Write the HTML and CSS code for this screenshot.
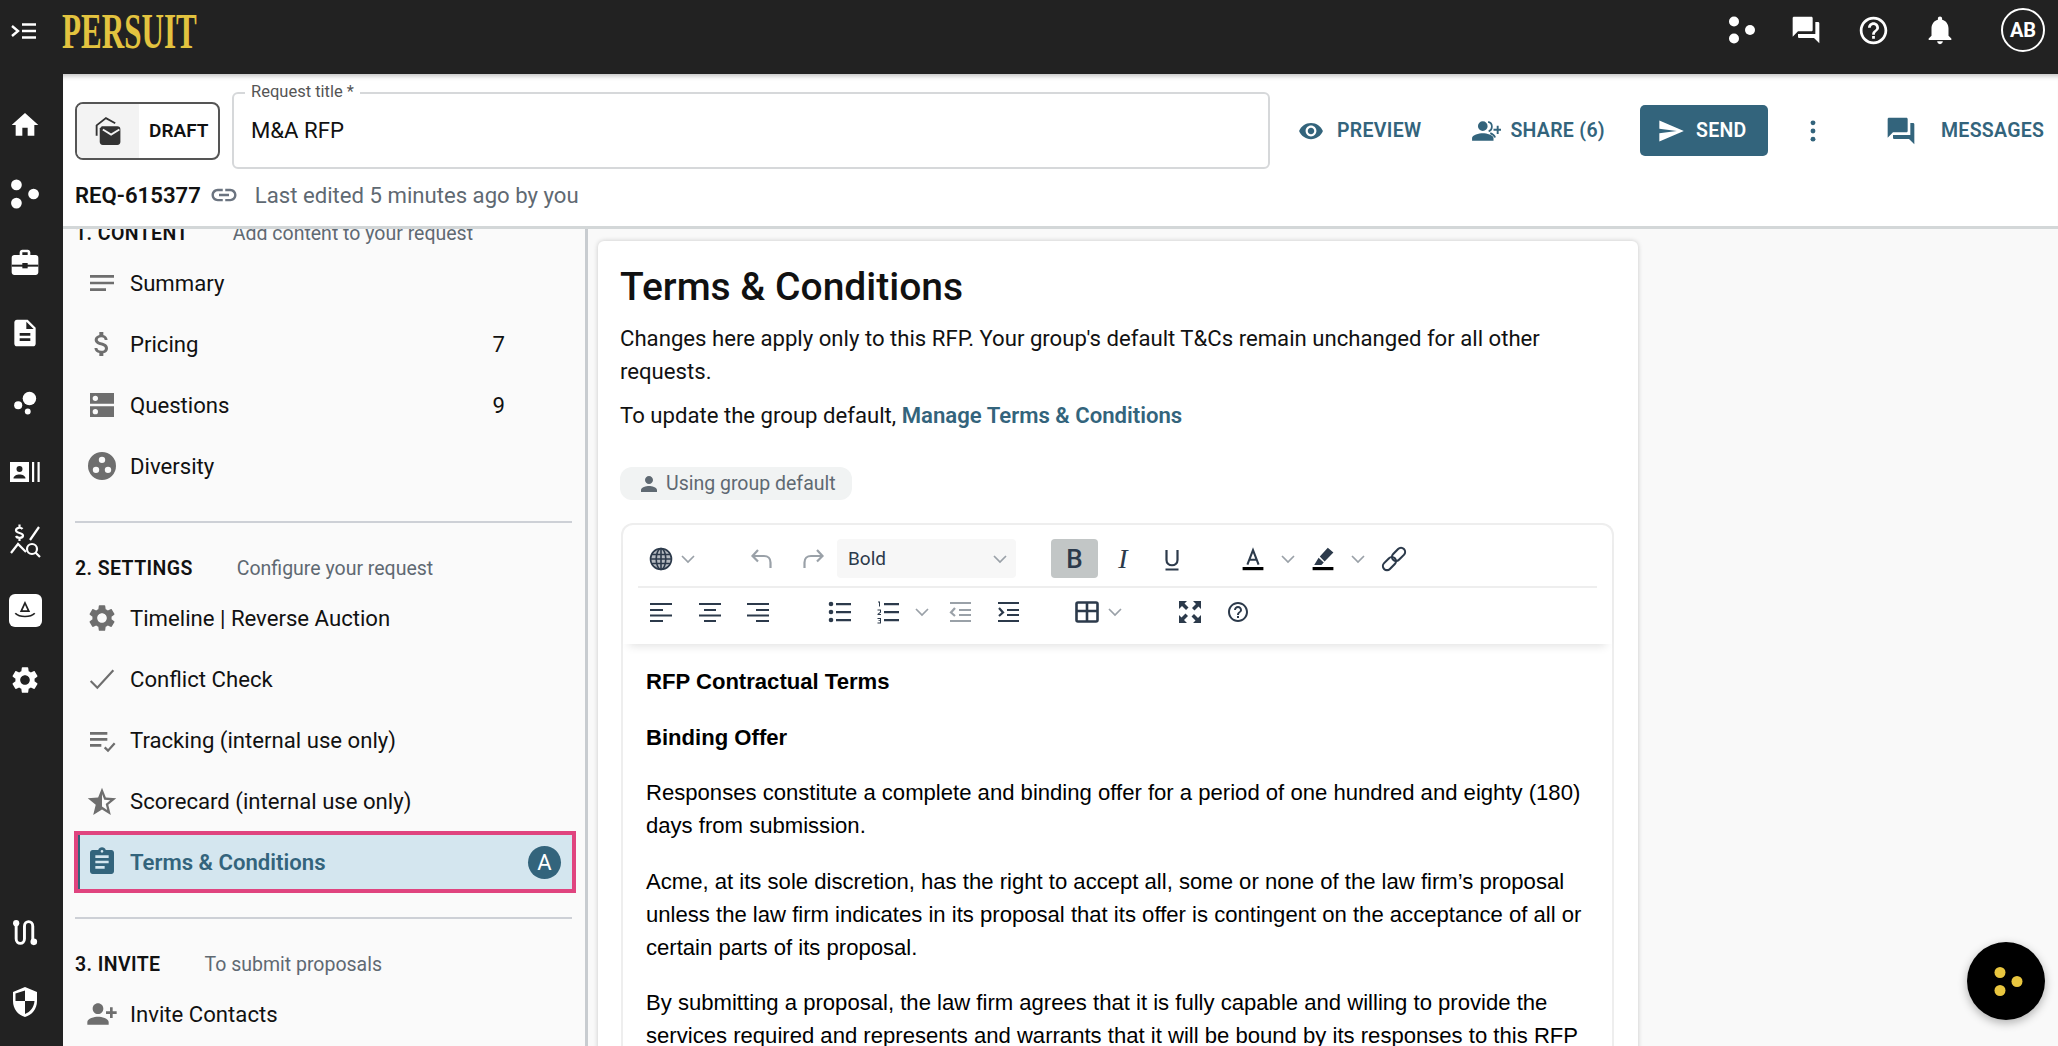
FILE: index.html
```html
<!DOCTYPE html>
<html lang="en">
<head>
    <meta charset="UTF-8">
    <meta name="viewport" content="width=device-width, initial-scale=1.0">
    <title>Terms &amp; Conditions</title>
    <link rel="stylesheet" href="styles.css">
</head>
<body>
    <svg class="defs" aria-hidden="true">
        <symbol id="i-dots" viewBox="0 0 28 28"><circle cx="6" cy="5.5" r="5"/><circle cx="6" cy="22.5" r="5"/><circle cx="22" cy="14" r="5"/></symbol>
        <symbol id="i-forum" viewBox="0 0 24 24"><path d="M21 6h-2v9H6v2c0 .55.45 1 1 1h11l4 4V7c0-.55-.45-1-1-1zm-4 6V3c0-.55-.45-1-1-1H3c-.55 0-1 .45-1 1v14l4-4h10c.55 0 1-.45 1-1z"/></symbol>
        <symbol id="i-gear" viewBox="0 0 24 24"><path d="M19.14 12.94c.04-.3.06-.61.06-.94 0-.32-.02-.64-.07-.94l2.03-1.58c.18-.14.23-.41.12-.61l-1.92-3.32c-.12-.22-.37-.29-.59-.22l-2.39.96c-.5-.38-1.03-.7-1.62-.94l-.36-2.54c-.04-.24-.24-.41-.48-.41h-3.84c-.24 0-.43.17-.47.41l-.36 2.54c-.59.24-1.13.57-1.62.94l-2.39-.96c-.22-.08-.47 0-.59.22L2.74 8.87c-.12.21-.08.47.12.61l2.03 1.58c-.05.3-.09.63-.09.94s.02.64.07.94l-2.03 1.58c-.18.14-.23.41-.12.61l1.92 3.32c.12.22.37.29.59.22l2.39-.96c.5.38 1.03.7 1.62.94l.36 2.54c.05.24.24.41.48.41h3.84c.24 0 .44-.17.47-.41l.36-2.54c.59-.24 1.13-.56 1.62-.94l2.39.96c.22.08.47 0 .59-.22l1.92-3.32c.12-.22.07-.47-.12-.61l-2.01-1.58zM12 15.6c-1.98 0-3.6-1.62-3.6-3.6s1.62-3.6 3.6-3.6 3.6 1.62 3.6 3.6-1.62 3.6-3.6 3.6z"/></symbol>
        <symbol id="i-help" viewBox="0 0 24 24"><path d="M11 18h2v-2h-2v2zm1-16C6.48 2 2 6.48 2 12s4.48 10 10 10 10-4.48 10-10S17.52 2 12 2zm0 18c-4.41 0-8-3.59-8-8s3.59-8 8-8 8 3.59 8 8-3.59 8-8 8zm0-14c-2.21 0-4 1.79-4 4h2c0-1.1.9-2 2-2s2 .9 2 2c0 2-3 1.75-3 5h2c0-2.25 3-2.5 3-5 0-2.21-1.79-4-4-4z"/></symbol>
        <symbol id="i-person-add" viewBox="0 0 24 24"><path transform="matrix(-1 0 0 1 24 0)" d="M15 12c2.21 0 4-1.79 4-4s-1.79-4-4-4-4 1.79-4 4 1.79 4 4 4zm-9-2V7H4v3H1v2h3v3h2v-3h3v-2H6zm9 4c-2.67 0-8 1.34-8 4v2h16v-2c0-2.66-5.33-4-8-4z"/></symbol>
        <symbol id="i-chev" viewBox="0 0 20 20"><path d="M4 7l6 6 6-6" fill="none" stroke="currentColor" stroke-width="1.7"/></symbol>
    </svg>

    <header class="topbar">
        <svg class="top-menu" viewBox="0 0 26 16" fill="none" stroke="currentColor" stroke-width="2.4"><path d="M1 3l6 5-6 5M11 1.500h14M11 8h14M11 14.500h14"/></svg>
        <div class="logo"><span>PERSUIT</span></div>
        <div class="top-icons">
            <svg class="ti-dots" fill="currentColor"><use href="#i-dots"/></svg>
            <svg class="ti-forum" fill="currentColor"><use href="#i-forum"/></svg>
            <svg class="ti-help" fill="currentColor"><use href="#i-help"/></svg>
            <svg class="ti-bell" viewBox="0 0 24 24" fill="currentColor"><path d="M12 22c1.1 0 2-.9 2-2h-4c0 1.1.89 2 2 2zm6-6v-5c0-3.07-1.64-5.64-4.5-6.32V4c0-.83-.67-1.5-1.5-1.5s-1.5.67-1.5 1.5v.68C7.63 5.36 6 7.92 6 11v5l-2 2v1h16v-1l-2-2z"/></svg>
            <div class="avatar">AB</div>
        </div>
    </header>

    <div class="shell">
        <nav class="rail">
            <span class="rail-btn"><svg viewBox="0 0 24 24" fill="currentColor"><path d="M10 20v-6h4v6h5v-8h3L12 3 2 12h3v8z"/></svg></span>
            <span class="rail-btn"><svg class="dots" fill="currentColor"><use href="#i-dots"/></svg></span>
            <span class="rail-btn"><svg viewBox="0 0 24 24" fill="currentColor"><path d="M20 6h-4V4c0-1.11-.89-2-2-2h-4c-1.11 0-2 .89-2 2v2H4c-1.11 0-1.99.89-1.99 2L2 19c0 1.11.89 2 2 2h16c1.11 0 2-.89 2-2V8c0-1.11-.89-2-2-2zm-6 0h-4V4h4v2z"/><path d="M2 14h20" stroke="#222" stroke-width="1.5"/><rect x="10" y="12" width="4" height="4" fill="#222"/></svg></span>
            <span class="rail-btn"><svg viewBox="0 0 24 24" fill="currentColor"><path d="M14 2H6c-1.1 0-1.99.9-1.99 2L4 20c0 1.1.89 2 1.99 2H18c1.1 0 2-.9 2-2V8l-6-6zm2 16H8v-2h8v2zm0-4H8v-2h8v2zm-3-5V3.5L18.5 9H13z"/></svg></span>
            <span class="rail-btn"><svg class="bubbles" viewBox="0 0 24 24" fill="currentColor"><circle cx="15.5" cy="8.5" r="6"/><circle cx="5.5" cy="14.5" r="3.6"/><circle cx="14" cy="20" r="2.6"/></svg></span>
            <span class="rail-btn"><svg class="wide" viewBox="0 0 32 24" fill="currentColor"><path fill-rule="evenodd" d="M1 2h19v20H1zM10.5 6a3 3 0 1 0 0 6 3 3 0 0 0 0-6zM4.500 18.500h12c0-2.500-3-4-6-4s-6 1.500-6 4z"/><path d="M23 2h2.200v20H23zM28.500 2h2.200v20h-2.200z"/></svg></span>
            <span class="rail-btn"><svg class="rfq" viewBox="0 0 32 36" fill="none" stroke="currentColor" stroke-width="2.2"><path d="M13.500 6c-1.500-2-6.500-1.500-6.500 1.500 0 3 7 2 7 5s-6 3-7 .5M10.500 1.500V4M10.500 15v3M21 17L30 4M2 30l7-9 8 8"/><circle cx="23" cy="26" r="5"/><path d="M26.500 29.500L31 34"/></svg></span>
            <span class="rail-btn"><span class="rail-logo"><svg viewBox="0 0 24 24" fill="none" stroke="#222" stroke-width="1.6"><path d="M12 5.500L8.500 13h7zM3 15c4 4 14 4 18 0"/></svg></span></span>
            <span class="rail-btn"><svg viewBox="0 0 24 24" fill="currentColor"><use href="#i-gear"/></svg></span>
            <span class="rail-btn rail-low"><svg class="route" viewBox="0 0 26 26" fill="none" stroke="currentColor" stroke-width="2.8"><path d="M4 4v15c0 6 8 6 8 0V7c0-6 8-6 8 0v15"/><circle cx="4" cy="4" r="3" fill="currentColor" stroke="none"/><circle cx="21" cy="22" r="3.200" fill="currentColor" stroke="none"/></svg></span>
            <span class="rail-btn"><svg class="tall" viewBox="0 0 26 32" fill="currentColor"><path fill-rule="evenodd" d="M13 1L1 6v9c0 8 5 14 12 16 7-2 12-8 12-16V6zM13 4.500V15H3.500V7.500zM13 15h9.500c-.5 6-4 11-9.500 13z"/></svg></span>
        </nav>

        <div class="page">
            <section class="req-head">
                <div class="req-row">
                    <div class="draft">
                        <span class="draft-icon"><svg viewBox="0 0 28 30" fill="none"><path d="M3 20V10l9-7 9 5" stroke="#333" stroke-width="1.8"/><path d="M8 11h15a3 3 0 0 1 3 3v12a3 3 0 0 1-3 3H9a3 3 0 0 1-3-3V13z" fill="#333"/><path d="M9 14l8 5 8-5" stroke="#f3f3f3" stroke-width="1.8"/></svg></span>
                        <span class="draft-text">DRAFT</span>
                    </div>
                    <div class="title-field">
                        <label class="title-label">Request title *</label>
                        <span class="title-value">M&amp;A RFP</span>
                    </div>
                    <a class="act act-preview"><svg viewBox="0 0 24 24" fill="currentColor"><path d="M12 4.500C7 4.500 2.730 7.610 1 12c1.730 4.390 6 7.500 11 7.500s9.270-3.110 11-7.500c-1.730-4.390-6-7.500-11-7.500zM12 17c-2.760 0-5-2.240-5-5s2.240-5 5-5 5 2.240 5 5-2.240 5-5 5zm0-8c-1.660 0-3 1.340-3 3s1.340 3 3 3 3-1.340 3-3-1.340-3-3-3z"/></svg>PREVIEW</a>
                    <a class="act act-share"><svg viewBox="0 0 28 24" fill="currentColor"><path d="M11 12a4.500 4.500 0 1 0 0-9 4.500 4.500 0 0 0 0 9zM11 14c-3.500 0-10 1.600-10 4.500V21h20v-2.500c0-2.900-6.500-4.500-10-4.500z"/><path d="M16 3.500c2.500.5 3.500 2.500 3.500 4.500s-1 3.600-3 4.300M18 14c2 .8 4 2 4.500 4" fill="none" stroke="currentColor" stroke-width="1.6"/><path d="M24 7v3h-3v1.800h3v3h1.800v-3H28.500V10h-2.700V7z"/></svg>SHARE (6)</a>
                    <button class="send"><svg viewBox="0 0 24 24" fill="currentColor"><path d="M2.010 21L23 12 2.010 3 2 10l15 2-15 2z"/></svg>SEND</button>
                    <span class="kebab"><svg viewBox="0 0 24 24" fill="currentColor"><circle cx="12" cy="5" r="2.1"/><circle cx="12" cy="12" r="2.1"/><circle cx="12" cy="19" r="2.1"/></svg></span>
                    <a class="act act-msg"><svg fill="currentColor"><use href="#i-forum"/></svg>MESSAGES</a>
                </div>
                <div class="req-meta">
                    <strong>REQ-615377</strong>
                    <svg class="meta-link" viewBox="0 0 24 24" fill="currentColor"><path d="M3.900 12c0-1.710 1.390-3.100 3.100-3.100h4V7H7c-2.760 0-5 2.240-5 5s2.240 5 5 5h4v-1.900H7c-1.710 0-3.100-1.390-3.100-3.100zM8 13h8v-2H8v2zm9-6h-4v1.900h4c1.710 0 3.100 1.390 3.100 3.100s-1.390 3.100-3.100 3.100h-4V17h4c2.760 0 5-2.240 5-5s-2.240-5-5-5z"/></svg>
                    <span class="meta-edit">Last edited 5 minutes ago by you</span>
                </div>
            </section>

            <div class="body-row">
                <aside class="side">
                    <div class="side-head side-first"><b>1. CONTENT</b><span>Add content to your request</span></div>
                    <a class="nav-item"><svg viewBox="0 0 24 24" fill="currentColor"><path d="M3 18h12v-2H3v2zM3 6v2h18V6H3zm0 7h18v-2H3v2z"/></svg>Summary</a>
                    <a class="nav-item"><svg viewBox="0 0 24 24" fill="currentColor"><path d="M11.800 10.900c-2.270-.590-3-1.200-3-2.150 0-1.090 1.010-1.850 2.700-1.850 1.780 0 2.440.850 2.500 2.100h2.210c-.070-1.720-1.120-3.300-3.210-3.810V3h-3v2.160c-1.940.420-3.500 1.680-3.500 3.610 0 2.310 1.910 3.460 4.700 4.130 2.500.600 3 1.480 3 2.410 0 .690-.490 1.790-2.700 1.790-2.060 0-2.870-.920-2.980-2.100h-2.200c.120 2.190 1.760 3.420 3.680 3.830V21h3v-2.150c1.950-.370 3.500-1.500 3.500-3.550 0-2.840-2.430-3.810-4.700-4.400z"/></svg>Pricing<span class="count">7</span></a>
                    <a class="nav-item"><svg viewBox="0 0 24 24" fill="currentColor"><path d="M21 13H3v8h18zM7 19a2 2 0 1 1 0-4 2 2 0 0 1 0 4zM21 3H3v8h18zM7 9a2 2 0 1 1 0-4 2 2 0 0 1 0 4z"/></svg>Questions<span class="count">9</span></a>
                    <a class="nav-item"><svg viewBox="0 0 24 24" fill="currentColor"><path fill-rule="evenodd" d="M12 1.500a10.500 10.500 0 1 0 0 21 10.500 10.500 0 0 0 0-21zM12 5a2.400 2.400 0 1 1 0 4.800A2.400 2.400 0 0 1 12 5zM7.500 12.500a2.400 2.400 0 1 1 0 4.800 2.400 2.400 0 0 1 0-4.800zM16.500 12.500a2.400 2.400 0 1 1 0 4.800 2.400 2.400 0 0 1 0-4.800z"/></svg>Diversity</a>
                    <hr class="side-rule">
                    <div class="side-head"><b>2. SETTINGS</b><span>Configure your request</span></div>
                    <a class="nav-item nav-after-head"><svg viewBox="0 0 24 24" fill="currentColor"><use href="#i-gear"/></svg>Timeline | Reverse Auction</a>
                    <a class="nav-item"><svg viewBox="0 0 24 24" fill="none" stroke="currentColor" stroke-width="1.6"><path d="M3.500 13.500L8.500 18.500 20.500 5.500"/></svg>Conflict Check</a>
                    <a class="nav-item"><svg viewBox="0 0 24 24" fill="currentColor"><path d="M3 6h13v2H3zM3 10.500h13v2H3zM3 15h8.500v2H3z"/><path d="M14 17.500l2.500 2.500 5-5.500" fill="none" stroke="currentColor" stroke-width="1.7"/></svg>Tracking (internal use only)</a>
                    <a class="nav-item"><svg viewBox="0 0 24 24"><path d="M12 2l2.900 7.300 7.800.6-6 5 1.900 7.600L12 18.400l-6.600 4.100 1.900-7.600-6-5 7.800-.6z" fill="#6e6e6e"/><path d="M12 6.800l1.700 4.300 4.500.3-3.400 2.900 1.100 4.400L12 16.200z" fill="#fafafa"/></svg>Scorecard (internal use only)</a>
                    <a class="nav-item nav-active"><svg viewBox="0 0 24 24" fill="currentColor"><path d="M19 3h-4.180C14.400 1.840 13.300 1 12 1c-1.300 0-2.400.840-2.820 2H5c-1.100 0-2 .900-2 2v14c0 1.100.900 2 2 2h14c1.100 0 2-.900 2-2V5c0-1.100-.900-2-2-2zm-7 0c.550 0 1 .450 1 1s-.450 1-1 1-1-.450-1-1 .450-1 1-1zm2 14H7v-2h7v2zm3-4H7v-2h10v2zm0-4H7V7h10v2z"/></svg>Terms &amp; Conditions<span class="badge">A</span></a>
                    <hr class="side-rule rule-after-active">
                    <div class="side-head"><b>3. INVITE</b><span>To submit proposals</span></div>
                    <a class="nav-item nav-after-head"><svg fill="currentColor"><use href="#i-person-add"/></svg>Invite Contacts</a>
                </aside>

                <main class="main">
                    <article class="card">
                        <h1>Terms &amp; Conditions</h1>
                        <p class="lead">Changes here apply only to this RFP. Your group's default T&amp;Cs remain unchanged for all other requests.</p>
                        <p class="lead lead-link">To update the group default, <a>Manage Terms &amp; Conditions</a></p>
                        <div class="chip"><svg viewBox="0 0 24 24" fill="currentColor"><path d="M12 12c2.210 0 4-1.790 4-4s-1.790-4-4-4-4 1.790-4 4 1.790 4 4 4zm0 2c-2.670 0-8 1.340-8 4v2h16v-2c0-2.660-5.330-4-8-4z"/></svg>Using group default</div>

                        <div class="editor">
                            <div class="toolbar">
                                <div class="tb-row tb-first">
                                    <span class="tb"><svg viewBox="0 0 24 24" fill="none" stroke="currentColor" stroke-width="1.6"><circle cx="12" cy="12" r="10.500" fill="currentColor" fill-opacity=".35"/><ellipse cx="12" cy="12" rx="4.800" ry="10.500"/><path d="M12 1.500v21M2.500 7.500h19M2.500 16.500h19M1.500 12h21"/></svg></span>
                                    <svg class="chev ml-2"><use href="#i-chev"/></svg>
                                    <span class="tb off ml-49"><svg viewBox="0 0 24 24" fill="none" stroke="currentColor" stroke-width="2.2"><path d="M8 3L2.500 9 8 14.500M3 9h11c4 0 6.500 2.800 6.500 6.500V21"/></svg></span>
                                    <span class="tb off ml-21"><svg viewBox="0 0 24 24" fill="none" stroke="currentColor" stroke-width="2.2"><path d="M16 3l5.500 6L16 14.500M21 9H10c-4 0-6.500 2.800-6.500 6.500V21"/></svg></span>
                                    <div class="style-select ml-9">Bold<svg class="chev"><use href="#i-chev"/></svg></div>
                                    <span class="tb tb-bold ml-35">B</span>
                                    <span class="tb tb-italic ml-10">I</span>
                                    <span class="tb ml-19"><svg viewBox="0 0 24 24" fill="none" stroke="currentColor" stroke-width="2.2"><path d="M6.500 3v10c0 7 11 7 11 0V3M5.500 22.500h13"/></svg></span>
                                    <span class="tb ml-51"><svg viewBox="0 0 30 30"><path d="M8 22L15 4l7 18M10.500 16h9" fill="none" stroke="#2c3a4b" stroke-width="2.6"/><rect x="2" y="25" width="26" height="4" fill="#000"/></svg></span>
                                    <svg class="chev ml-10"><use href="#i-chev"/></svg>
                                    <span class="tb ml-10"><svg viewBox="0 0 30 30"><path d="M21 1l7 6-11 11-6-6zM9.500 13.500l6.500 6-3 3H4z" fill="#2c3a4b"/><rect x="2" y="25" width="26" height="4" fill="#000"/></svg></span>
                                    <svg class="chev ml-10"><use href="#i-chev"/></svg>
                                    <span class="tb tb-link ml-11"><svg viewBox="0 0 24 24" fill="none" stroke="currentColor" stroke-width="1.8"><g transform="rotate(-45 12 12)"><rect x="0" y="8.500" width="13" height="7" rx="3.500"/><rect x="11" y="8.500" width="13" height="7" rx="3.500"/></g></svg></span>
                                </div>
                                <div class="tb-row">
                                    <span class="tb"><svg viewBox="0 0 24 24" fill="none" stroke="currentColor" stroke-width="2.2"><path d="M1 4h22M1 10h13M1 15.500h22M1 21h13"/></svg></span>
                                    <span class="tb ml-19"><svg viewBox="0 0 24 24" fill="none" stroke="currentColor" stroke-width="2.2"><path d="M1 4h22M6 10h12M1 15.500h22M6 21h12"/></svg></span>
                                    <span class="tb ml-18"><svg viewBox="0 0 24 24" fill="none" stroke="currentColor" stroke-width="2.2"><path d="M1 4h22M10 10h13M1 15.500h22M10 21h13"/></svg></span>
                                    <span class="tb ml-52"><svg viewBox="0 0 24 24" fill="currentColor"><circle cx="3" cy="4" r="2.3"/><circle cx="3" cy="12" r="2.3"/><circle cx="3" cy="20" r="2.3"/><path d="M8 3h15v2.200H8zM8 11h15v2.200H8zM8 19h15v2.200H8z"/></svg></span>
                                    <span class="tb ml-18"><svg viewBox="0 0 24 24" fill="currentColor"><path d="M8 3h15v2.200H8zM8 11h15v2.200H8zM8 19h15v2.200H8zM2 1.500h2v5H3V2.500H2zM1.500 9.500h3.500v3L3 14h2v1H1.500v-1L4 12v-1.500H1.500zM1.500 18H5v5.500H1.500v-1H4V21H2.500v-.8H4v-1.200H1.500z"/></svg></span>
                                    <svg class="chev ml-9"><use href="#i-chev"/></svg>
                                    <span class="tb off ml-13"><svg viewBox="0 0 24 24" fill="none" stroke="currentColor" stroke-width="2.2"><path d="M2 3h21M11 10h12M11 15h12M2 21h21M7 8l-4 4.500L7 16"/></svg></span>
                                    <span class="tb ml-18"><svg viewBox="0 0 24 24" fill="none" stroke="currentColor" stroke-width="2.2"><path d="M2 3h21M11 10h12M11 15h12M2 21h21M3 8l4 4.500L3 16"/></svg></span>
                                    <span class="tb ml-49"><svg viewBox="0 0 24 24" fill="none" stroke="currentColor" stroke-width="2.6"><rect x="1.500" y="2.500" width="21" height="19" rx="1.500"/><path d="M1.500 11h21M12 3v18"/></svg></span>
                                    <svg class="chev ml-3"><use href="#i-chev"/></svg>
                                    <span class="tb ml-50"><svg viewBox="0 0 24 24" fill="currentColor"><path d="M1 1h8L6.500 3.500l4 4-2.500 2.500-4-4L1 9zM23 1v8l-2.500-2.500-4 4-2.500-2.500 4-4L15 1zM1 23v-8l2.500 2.500 4-4 2.500 2.500-4 4L9 23zM23 23h-8l2.500-2.500-4-4 2.500-2.500 4 4L23 15z"/></svg></span>
                                    <span class="tb ml-18"><svg fill="currentColor"><use href="#i-help"/></svg></span>
                                </div>
                            </div>
                            <div class="doc">
                                <p><strong>RFP Contractual Terms</strong></p>
                                <p><strong>Binding Offer</strong></p>
                                <p>Responses constitute a complete and binding offer for a period of one hundred and eighty (180) days from submission.</p>
                                <p>Acme, at its sole discretion, has the right to accept all, some or none of the law firm’s proposal unless the law firm indicates in its proposal that its offer is contingent on the acceptance of all or certain parts of its proposal.</p>
                                <p>By submitting a proposal, the law firm agrees that it is fully capable and willing to provide the services required and represents and warrants that it will be bound by its responses to this RFP and any resulting contract.</p>
                            </div>
                        </div>
                    </article>
                </main>
            </div>
        </div>
    </div>

    <button class="fab"><svg viewBox="0 0 34 34" fill="#e9c63f"><circle cx="11" cy="8.500" r="5.500"/><circle cx="11" cy="26.500" r="5.500"/><circle cx="28" cy="17.500" r="5.500"/></svg></button>
</body>
</html>
```

FILE: styles.css
```css
* {
    box-sizing: border-box;
}
html, body {
    height: 100%;
}
body {
    margin: 0;
    overflow: hidden;
    display: flex;
    flex-direction: column;
    background: #fafafa;
    color: #111;
    font-family: Roboto, "Liberation Sans", sans-serif;
}
a {
    text-decoration: none;
}
.defs {
    display: none;
}

/* top bar */
.topbar {
    flex: none;
    height: 74px;
    background: #222;
    color: #fff;
    display: flex;
    align-items: flex-start;
    position: relative;
    z-index: 3;
}
.top-menu {
    width: 26px;
    height: 16px;
    margin: 23px 0 0 11px;
}
.logo {
    width: 135px;
    margin: 4px 0 0 25px;
    color: #e3c33f;
    font-family: "Liberation Serif", serif;
    font-size: 50px;
    font-weight: 700;
    line-height: 54px;
}
.logo span {
    display: inline-block;
    transform: scaleX(.622);
    transform-origin: left center;
}
.top-icons {
    margin-left: auto;
    display: flex;
    align-items: center;
    height: 60px;
    padding-right: 13px;
}
.ti-dots {
    width: 28px;
    height: 28px;
}
.ti-forum {
    width: 32px;
    height: 32px;
    margin-left: 34px;
}
.ti-help {
    width: 33px;
    height: 33px;
    margin-left: 35px;
}
.ti-bell {
    width: 34px;
    height: 34px;
    margin-left: 33px;
}
.avatar {
    width: 44px;
    height: 44px;
    margin-left: 44px;
    border: 2px solid #fff;
    border-radius: 50%;
    display: flex;
    align-items: center;
    justify-content: center;
    font-size: 20px;
    font-weight: 700;
}

.shell {
    flex: 1;
    min-height: 0;
    display: flex;
}

/* left rail */
.rail {
    flex: none;
    width: 63px;
    background: #222;
    color: #fff;
    display: flex;
    flex-direction: column;
    padding: 16px 13px 9px 0;
}
.rail-btn {
    height: 69.4px;
    display: flex;
    align-items: center;
    justify-content: center;
}
.rail-btn svg {
    width: 32px;
    height: 32px;
}
.rail-btn svg.dots {
    width: 30px;
    height: 30px;
}
.rail-btn svg.bubbles {
    width: 27px;
    height: 27px;
}
.rail-btn svg.wide {
    width: 32px;
    height: 24px;
}
.rail-btn svg.rfq {
    width: 32px;
    height: 36px;
}
.rail-btn svg.route {
    width: 27px;
    height: 27px;
}
.rail-btn svg.tall {
    width: 26px;
    height: 32px;
}
.rail-low {
    margin-top: auto;
}
.rail-logo {
    width: 33px;
    height: 33px;
    background: #fff;
    border-radius: 6px;
    display: flex;
    align-items: center;
    justify-content: center;
}
.rail-logo svg {
    width: 26px !important;
    height: 26px !important;
}

.page {
    flex: 1;
    min-width: 0;
    display: flex;
    flex-direction: column;
}

/* request header */
.req-head {
    flex: none;
    height: 155px;
    background: #fff;
    border-bottom: 3px solid #d3d7d8;
    padding: 18px 0 0 12px;
    box-shadow: inset 0 6px 5px -4px rgba(0, 0, 0, .25);
    position: relative;
    z-index: 2;
}
.req-row {
    display: flex;
    align-items: center;
    height: 77px;
}
.draft {
    width: 145px;
    height: 58px;
    border: 2px solid #555;
    border-radius: 8px;
    display: flex;
    align-items: center;
    overflow: hidden;
}
.draft-icon {
    width: 62px;
    height: 100%;
    background: #f3f3f3;
    display: flex;
    align-items: center;
    justify-content: center;
}
.draft-icon svg {
    width: 30px;
    height: 31px;
}
.draft-text {
    margin-left: 10px;
    font-size: 19px;
    font-weight: 600;
}
.title-field {
    width: 1038px;
    height: 77px;
    margin-left: 12px;
    border: 2px solid #d6d8da;
    border-radius: 6px;
    display: flex;
    align-items: center;
    padding: 0 0 2px 17px;
    position: relative;
}
.title-label {
    position: absolute;
    left: 11px;
    top: -12px;
    padding: 0 6px;
    background: #fff;
    color: #555;
    font-size: 16.5px;
    line-height: 20px;
}
.title-value {
    font-size: 22.15px;
}
.act {
    display: flex;
    align-items: center;
    color: #33647c;
    font-size: 19.5px;
    font-weight: 600;
    letter-spacing: .3px;
}
.act svg {
    flex: none;
}
.act-preview {
    margin-left: 28px;
}
.act-preview svg {
    width: 26px;
    height: 26px;
    margin-right: 13px;
}
.act-share {
    margin-left: 50px;
}
.act-share svg {
    width: 30px;
    height: 26px;
    margin-right: 9px;
}
.send {
    width: 128px;
    height: 51px;
    margin-left: 35px;
    background: #33647c;
    color: #fff;
    border: none;
    border-radius: 5px;
    font: 600 19.5px Roboto, sans-serif;
    letter-spacing: .3px;
    display: flex;
    align-items: center;
    padding-left: 17px;
}
.send svg {
    width: 28px;
    height: 28px;
    margin-right: 11px;
}
.kebab {
    margin-left: 31px;
    width: 28px;
    height: 28px;
    color: #33647c;
}
.kebab svg {
    width: 28px;
    height: 28px;
}
.act-msg {
    margin-left: 58px;
}
.act-msg svg {
    width: 32px;
    height: 32px;
    margin-right: 24px;
}
.req-meta {
    display: flex;
    align-items: center;
    height: 26px;
    margin-top: 13px;
    font-size: 22.15px;
}
.req-meta strong {
    font-weight: 600;
}
.meta-link {
    width: 30px;
    height: 30px;
    margin-left: 8px;
    color: #6b7480;
}
.meta-edit {
    margin-left: 16px;
    color: #5f6972;
}

.body-row {
    flex: 1;
    min-height: 0;
    display: flex;
}

/* sidebar */
.side {
    flex: none;
    width: 525px;
    padding: 0 13px 0 12px;
    background: #fafafa;
    border-right: 3px solid #c8ccd0;
    overflow: hidden;
}
.side-head {
    display: flex;
    align-items: center;
    height: 24px;
    font-size: 19.5px;
}
.side-head b {
    font-weight: 600;
    letter-spacing: .4px;
}
.side-head span {
    margin-left: 44px;
    color: #5f6972;
}
.side-first {
    margin-top: -8px;
    margin-bottom: 7px;
}
.nav-item {
    height: 61px;
    display: flex;
    align-items: center;
    padding: 0 67px 0 11px;
    color: #111;
    font-size: 22.15px;
}
.nav-item svg {
    width: 32px;
    height: 32px;
    margin-right: 12px;
    color: #6e6e6e;
    flex: none;
}
.count {
    margin-left: auto;
}
.nav-after-head {
    margin-top: 7px;
}
.nav-active {
    height: 54px;
    margin: 4px 0 3px 3px;
    padding: 0 11px 0 6px;
    outline: 4px solid #e0447f;
    border-left: 2px solid #33647c;
    background: #d4e6ef;
    color: #33647c;
    font-weight: 600;
}
.nav-active svg {
    color: #33647c;
}
.badge {
    width: 33px;
    height: 33px;
    margin-left: auto;
    border-radius: 50%;
    background: #33647c;
    color: #fff;
    font-size: 22px;
    font-weight: 400;
    display: flex;
    align-items: center;
    justify-content: center;
}
.side-rule {
    height: 2px;
    margin: 25px 0 33px;
    border: none;
    background: #cdd0d6;
}
.rule-after-active {
    margin-top: 28px;
}

/* main card */
.main {
    flex: 1;
    min-width: 0;
    background: #f9f9f9;
    overflow: hidden;
    padding: 12px 0 0 10px;
}
.card {
    width: 1040px;
    padding: 22px 24px 0 22px;
    background: #fff;
    border-radius: 6px;
    box-shadow: 0 0 5px rgba(0, 0, 0, .2);
}
.card h1 {
    margin: 0;
    font-size: 39px;
    font-weight: 500;
    line-height: 48px;
}
.lead {
    margin: 11px 0 0;
    font-size: 22.15px;
    line-height: 33px;
}
.lead-link {
    margin-top: 11px;
}
.lead a {
    color: #33647c;
    font-weight: 600;
}
.chip {
    width: 232px;
    height: 33px;
    margin-top: 35px;
    padding-left: 17px;
    border-radius: 12px;
    background: #f1f3f3;
    color: #5f6972;
    font-size: 19.5px;
    display: flex;
    align-items: center;
}
.chip svg {
    width: 24px;
    height: 24px;
    margin-right: 5px;
}

/* editor */
.editor {
    width: 993px;
    margin: 23px 0 0 1px;
    border: 2px solid #eee;
    border-bottom: none;
    border-radius: 12px 12px 0 0;
}
.toolbar {
    height: 119px;
    padding: 0 15px;
    box-shadow: 0 8px 10px -6px rgba(0, 0, 0, .12);
    border-radius: 12px 12px 0 0;
    color: #2c3a4b;
}
.tb-row {
    display: flex;
    align-items: center;
    padding-left: 8px;
    height: 48px;
}
.tb-first {
    height: 63px;
    padding-top: 6px;
    border-bottom: 2px solid #eee;
}
.tb {
    width: 30px;
    height: 30px;
    flex: none;
    display: flex;
    align-items: center;
    justify-content: center;
}
.tb svg {
    width: 24px;
    height: 24px;
}
.tb-link svg {
    width: 28px;
    height: 28px;
}
.tb.off {
    color: #9aa1a8;
}
.chev {
    width: 20px;
    height: 20px;
    flex: none;
    color: #9aa1a8;
}
.style-select {
    width: 179px;
    height: 39px;
    padding: 0 6px 0 11px;
    background: #f7f7f7;
    border-radius: 4px;
    font-size: 19px;
    color: #2c3a4b;
    display: flex;
    align-items: center;
    justify-content: space-between;
}
.tb-bold {
    width: 47px;
    height: 39px;
    background: #c2c6c6;
    border-radius: 4px;
    font-size: 26px;
    font-weight: 500;
}
.tb-italic {
    font-family: "Liberation Serif", serif;
    font-style: italic;
    font-size: 28px;
}
.ml-2 { margin-left: 2px; }
.ml-3 { margin-left: 3px; }
.ml-9 { margin-left: 9px; }
.ml-10 { margin-left: 10px; }
.ml-11 { margin-left: 11px; }
.ml-13 { margin-left: 13px; }
.ml-18 { margin-left: 18px; }
.ml-19 { margin-left: 19px; }
.ml-21 { margin-left: 21px; }
.ml-35 { margin-left: 35px; }
.ml-49 { margin-left: 49px; }
.ml-50 { margin-left: 50px; }
.ml-51 { margin-left: 51px; }
.ml-52 { margin-left: 52px; }

.doc {
    padding: 21px 24px 0 23px;
    color: #000;
    font-family: "Liberation Sans", Arial, sans-serif;
    font-size: 22.1px;
    line-height: 33px;
}
.doc p {
    margin: 0 0 22.5px;
}
.doc strong {
    font-weight: 700;
}

.fab {
    position: absolute;
    left: 1967px;
    top: 942px;
    width: 78px;
    height: 78px;
    padding: 0;
    border: none;
    border-radius: 50%;
    background: #000;
    box-shadow: 0 3px 10px rgba(0, 0, 0, .3);
    display: flex;
    align-items: center;
    justify-content: center;
    z-index: 4;
}
.fab svg {
    width: 34px;
    height: 34px;
}
```
